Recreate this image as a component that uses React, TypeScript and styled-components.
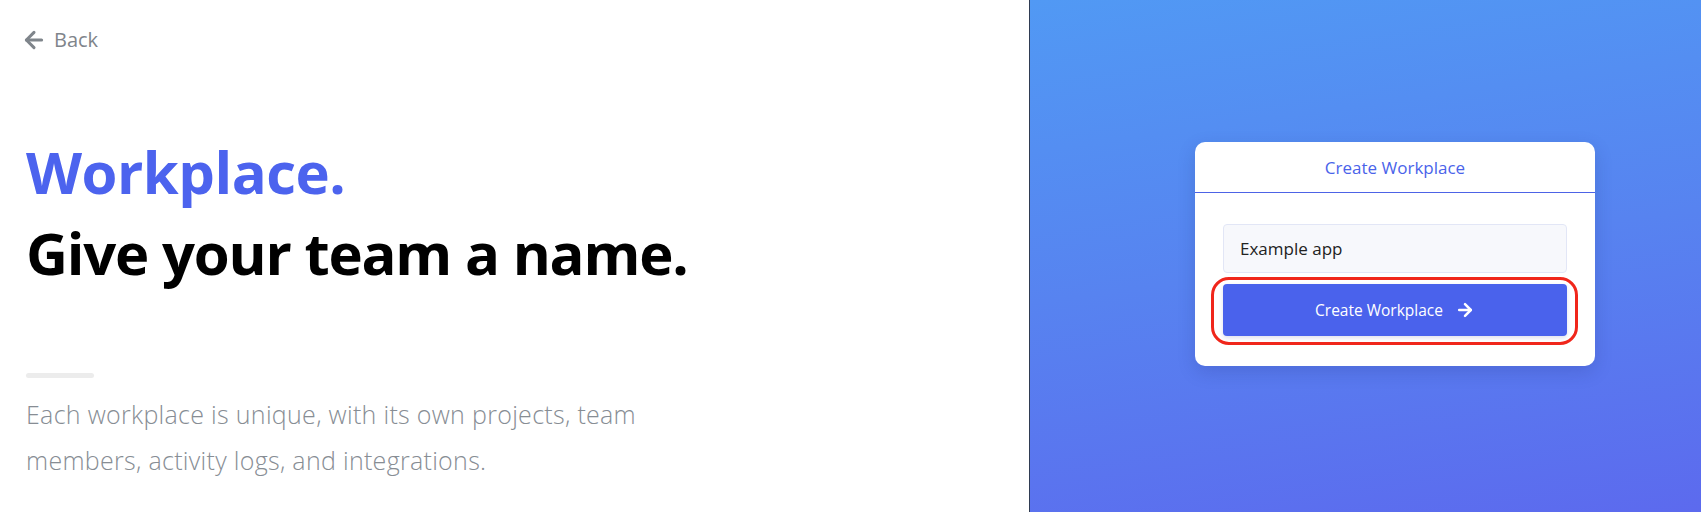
import { ArrowLeft, ArrowRight } from "lucide-react";
import styled, { createGlobalStyle } from "styled-components";

const GlobalStyle = createGlobalStyle`
  * {
    box-sizing: border-box;
  }
  html,
  body {
    margin: 0;
    padding: 0;
    background: #fff;
    font-family: "Open Sans", "Noto Sans", sans-serif;
  }
`;

const App = () => {
  return (
    <>
      <GlobalStyle />
      <Page>
        <Intro>
          <BackLink href="#">
            <ArrowLeft size={26} strokeWidth={2.8} />
            <span>Back</span>
          </BackLink>
          <Heading>
            <Accent>Workplace.</Accent>
            <br />
            Give your team a name.
          </Heading>
          <Rule />
          <Lead>
            Each workplace is unique, with its own projects, team
            <br />
            members, activity logs, and integrations.
          </Lead>
        </Intro>
        <Side>
          <Card>
            <CardHeader>Create Workplace</CardHeader>
            <CardBody>
              <NameInput defaultValue="Example app" />
              <Highlight>
                <SubmitButton type="button">
                  Create Workplace
                  <ArrowRight size={20} strokeWidth={3} />
                </SubmitButton>
              </Highlight>
            </CardBody>
          </Card>
        </Side>
      </Page>
    </>
  );
};

const Page = styled.div`
  display: flex;
  height: 100vh;
  min-height: 512px;
`;

const Intro = styled.div`
  width: 1030px;
  flex-shrink: 0;
  padding: 26px 0 0 21px;
  border-right: 1px solid #2f3b52;
  display: flex;
  flex-direction: column;
  align-items: flex-start;
`;

const BackLink = styled.a`
  display: flex;
  align-items: center;
  gap: 7px;
  height: 28px;
  color: #7f858b;
  font-size: 20px;
  line-height: 28px;
  text-decoration: none;
`;

const Heading = styled.h1`
  margin: 77px 0 0 5px;
  font-size: 58px;
  line-height: 81px;
  font-weight: 700;
  color: #000;
  letter-spacing: -1.2px;
`;

const Accent = styled.span`
  color: #4c63ee;
  letter-spacing: -0.5px;
`;

const Rule = styled.div`
  width: 68px;
  height: 5px;
  margin: 80px 0 0 5px;
  border-radius: 3px;
  background: #ececec;
`;

const Lead = styled.p`
  margin: 13px 0 0 5px;
  font-size: 25px;
  line-height: 46px;
  font-weight: 300;
  color: #878d94;
  letter-spacing: 0.3px;
`;

const Side = styled.div`
  flex: 1;
  display: flex;
  align-items: center;
  justify-content: center;
  padding: 0 0 4px 59px;
  background: linear-gradient(172deg, #5199f4 0%, #5783f0 50%, #5c6aee 100%);
`;

const Card = styled.div`
  width: 400px;
  background: #fff;
  border-radius: 10px;
  box-shadow: 0 6px 18px rgba(30, 40, 110, 0.18);
  overflow: hidden;
`;

const CardHeader = styled.div`
  height: 51px;
  border-bottom: 1px solid #4d63e6;
  display: flex;
  align-items: center;
  justify-content: center;
  color: #4a63ea;
  font-size: 17px;
`;

const CardBody = styled.div`
  padding: 31px 28px 30px;
  display: flex;
  flex-direction: column;
  gap: 11px;
`;

const NameInput = styled.input`
  height: 49px;
  width: 100%;
  padding: 0 16px;
  border: 1px solid #e2e6f6;
  border-radius: 4px;
  background: #f7f8fc;
  color: #222;
  font-family: inherit;
  font-size: 17px;
  outline: none;
`;

const Highlight = styled.div`
  position: relative;

  &::after {
    content: "";
    position: absolute;
    inset: -7px -11px -9px -12px;
    border: 3.5px solid #f0261b;
    border-radius: 18px;
    pointer-events: none;
  }
`;

const SubmitButton = styled.button`
  width: 100%;
  height: 52px;
  border: none;
  border-radius: 4px;
  background: #4a62ec;
  color: #fff;
  font-family: inherit;
  font-size: 15.5px;
  display: flex;
  align-items: center;
  justify-content: center;
  gap: 12px;
  cursor: pointer;
  box-shadow: 0 2px 4px rgba(40, 50, 140, 0.15);
`;

export default App;
